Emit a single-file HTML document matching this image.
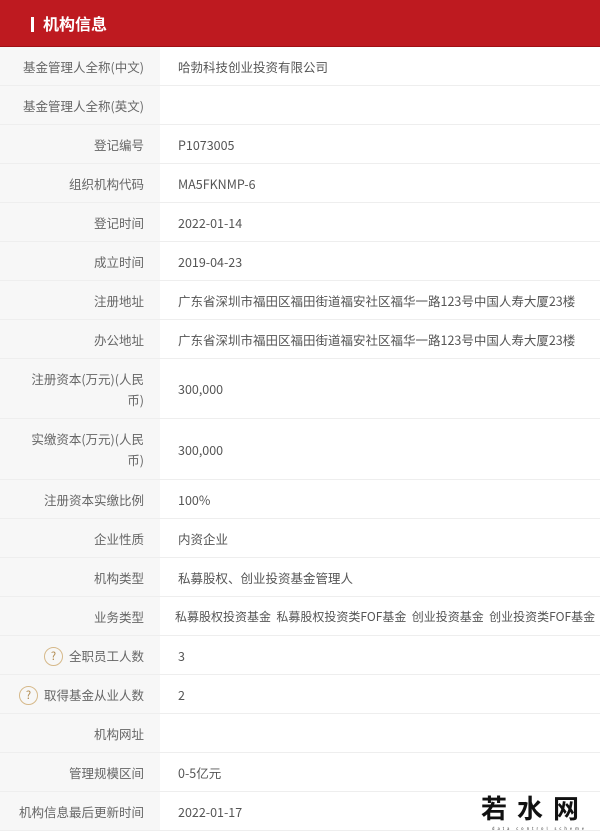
<!DOCTYPE html>
<html><head><meta charset="utf-8"><style>
*{margin:0;padding:0;box-sizing:border-box}
body{width:600px;height:833px;background:#fff;font-family:"Noto Sans CJK SC","Liberation Sans",sans-serif;font-size:12.5px;color:#555;overflow:hidden;position:relative}
.hd{height:47px;background:#be1a20;color:#fff;font-weight:bold;font-size:16px;line-height:47px;padding-left:31px;border-bottom:1px solid #a01015}
.hd span{display:inline-block;width:3px;height:15px;background:#fff;vertical-align:-2px;margin-right:9px}
.r{display:flex;border-bottom:1px solid #eee}
.l{width:160px;flex:0 0 160px;background:#f7f7f7;text-align:right;padding:0 16px 0 4px;display:flex;align-items:center;justify-content:flex-end;line-height:21px;white-space:nowrap;color:#666}
.l.w{white-space:normal;padding-left:30px}
.v{flex:1;padding-left:18px;display:flex;align-items:center;white-space:nowrap;min-width:0;line-height:21px}
.q{display:inline-block;width:19px;height:19px;border:1.5px solid #d6b98a;border-radius:50%;color:#b08a50;font-size:11px;line-height:16px;text-align:center;margin-right:6px;margin-top:2px}
.wm{position:absolute;left:481px;top:793px;font-size:26px;color:#111;letter-spacing:10px;font-family:"Noto Sans CJK SC",sans-serif;font-weight:bold;line-height:30px}
.wm2{position:absolute;left:492px;top:826px;font-size:4px;color:#333;letter-spacing:3px}
</style></head><body>
<div class="hd"><span></span>机构信息</div>
<div class="r" style="height:39px"><div class="l">基金管理人全称(中文)</div><div class="v">哈勃科技创业投资有限公司</div></div>
<div class="r" style="height:39px"><div class="l">基金管理人全称(英文)</div><div class="v"></div></div>
<div class="r" style="height:39px"><div class="l">登记编号</div><div class="v">P1073005</div></div>
<div class="r" style="height:39px"><div class="l">组织机构代码</div><div class="v">MA5FKNMP-6</div></div>
<div class="r" style="height:39px"><div class="l">登记时间</div><div class="v">2022-01-14</div></div>
<div class="r" style="height:39px"><div class="l">成立时间</div><div class="v">2019-04-23</div></div>
<div class="r" style="height:39px"><div class="l">注册地址</div><div class="v">广东省深圳市福田区福田街道福安社区福华一路123号中国人寿大厦23楼</div></div>
<div class="r" style="height:39px"><div class="l">办公地址</div><div class="v">广东省深圳市福田区福田街道福安社区福华一路123号中国人寿大厦23楼</div></div>
<div class="r" style="height:60px"><div class="l w">注册资本(万元)(人民币)</div><div class="v">300,000</div></div>
<div class="r" style="height:61px"><div class="l w">实缴资本(万元)(人民币)</div><div class="v">300,000</div></div>
<div class="r" style="height:39px"><div class="l">注册资本实缴比例</div><div class="v">100%</div></div>
<div class="r" style="height:39px"><div class="l">企业性质</div><div class="v">内资企业</div></div>
<div class="r" style="height:39px"><div class="l">机构类型</div><div class="v">私募股权、创业投资基金管理人</div></div>
<div class="r" style="height:39px"><div class="l">业务类型</div><div class="v" style="padding-left:15px;font-size:12px">私募股权投资基金&nbsp; 私募股权投资类FOF基金&nbsp; 创业投资基金&nbsp; 创业投资类FOF基金</div></div>
<div class="r" style="height:39px"><div class="l"><span class="q">?</span>全职员工人数</div><div class="v">3</div></div>
<div class="r" style="height:39px"><div class="l"><span class="q">?</span>取得基金从业人数</div><div class="v">2</div></div>
<div class="r" style="height:39px"><div class="l">机构网址</div><div class="v"></div></div>
<div class="r" style="height:39px"><div class="l">管理规模区间</div><div class="v">0-5亿元</div></div>
<div class="r" style="height:39px"><div class="l">机构信息最后更新时间</div><div class="v">2022-01-17</div></div>
<div class="wm">若水网</div>
<div class="wm2">data control scheme</div>
</body></html>
